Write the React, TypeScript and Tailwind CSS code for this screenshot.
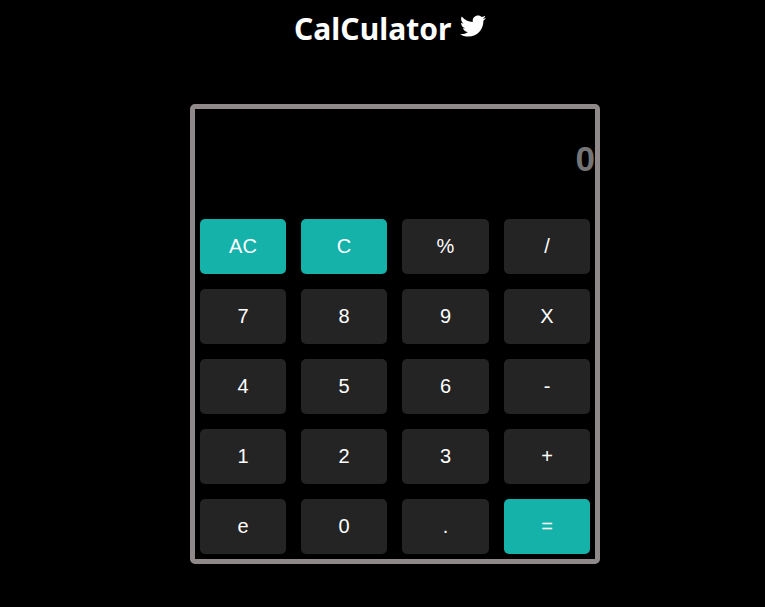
import { FaTwitter } from "react-icons/fa";

const keys = [
  "AC", "C", "%", "/",
  "7", "8", "9", "X",
  "4", "5", "6", "-",
  "1", "2", "3", "+",
  "e", "0", ".", "=",
];

const accentKeys = new Set(["AC", "C", "="]);

function Key({ label }: { label: string }) {
  const tone = accentKeys.has(label) ? "bg-[#14b2a8]" : "bg-[#242424]";
  return (
    <button className={`h-[55px] rounded-[5px] pb-[2px] text-[20px] text-white ${tone}`}>
      {label}
    </button>
  );
}

export default function App() {
  return (
    <div className="h-[607px] overflow-hidden bg-black font-['Liberation_Sans',sans-serif]">
      <h1 className="flex h-[104px] items-start pl-[294px] pt-[9px] font-['Noto_Sans',sans-serif] text-[30px] font-bold leading-[40px] text-white">
        <span className="w-[166px] whitespace-nowrap tracking-[0.05px]">CalCulator</span>
        <FaTwitter className="mt-[3.5px] size-[26px]" />
      </h1>
      <main className="ml-[190px] h-[460px] w-[410px] rounded-[5px] border-[5px] border-[#8f8989]">
        <input
          className="block h-[100px] w-full bg-transparent pb-[1px] text-right text-[35px] font-bold text-white outline-none placeholder:text-[#757575]"
          placeholder="0"
          readOnly
        />
        <div className="mt-[10px] grid grid-cols-[86px_86px_87px_86px] gap-[15px] px-[5px]">
          {keys.map((label) => (
            <Key key={label} label={label} />
          ))}
        </div>
      </main>
    </div>
  );
}
